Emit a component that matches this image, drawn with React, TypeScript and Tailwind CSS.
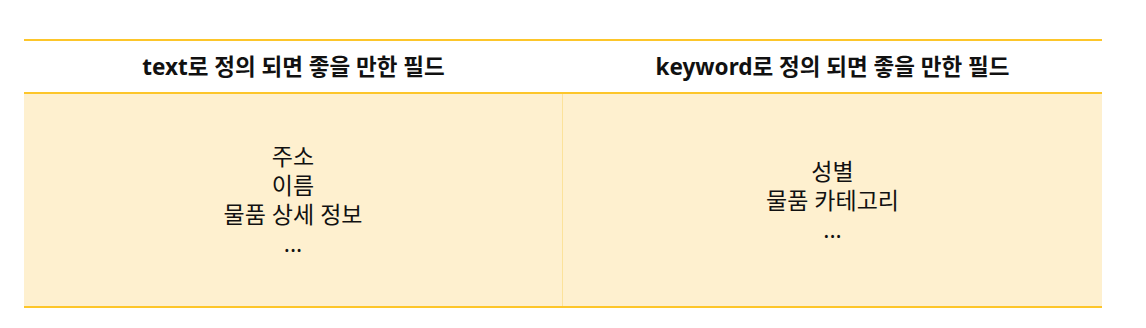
import React from 'react';

const columns = [
  { title: 'text로 정의 되면 좋을 만한 필드', items: ['주소', '이름', '물품 상세 정보', '...'] },
  { title: 'keyword로 정의 되면 좋을 만한 필드', items: ['성별', '물품 카테고리', '...'] },
];

const App: React.FC = () => {
  return (
    <div className="w-[1146px] h-[328px] bg-white pt-[39px] px-[24px] font-['Noto_Sans','Noto_Sans_CJK_KR',sans-serif] text-[#111]">
      <div className="w-[1078px] border-t-2 border-b-2 border-[#fdc62a]">
        <div className="grid grid-cols-2 h-[53px] border-b-2 border-[#fdc62a]">
          {columns.map((col) => (
            <div key={col.title} className="flex items-center justify-center text-[22.5px] font-bold">
              {col.title}
            </div>
          ))}
        </div>
        <div className="grid grid-cols-2 h-[212px] bg-[#fef0cf]">
          {columns.map((col, i) => (
            <div
              key={col.title}
              className={`flex flex-col items-center justify-center text-[23px] leading-[29px] ${i === 0 ? 'border-r border-[#fce29a]' : ''}`}
            >
              {col.items.map((item) => (
                <div key={item}>{item}</div>
              ))}
            </div>
          ))}
        </div>
      </div>
    </div>
  );
};

export default App;
